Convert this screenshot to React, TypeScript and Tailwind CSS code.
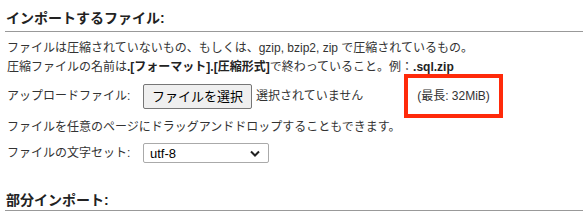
import React from "react";

export default function App() {
  return (
    <div
      className="w-[583px] h-[211px] overflow-hidden bg-white text-[#333]"
      style={{ fontFamily: '"Liberation Sans", "Noto Sans CJK JP", sans-serif' }}
    >
      <div className="pl-[5px] pt-[9px]">
        <h2 className="text-[14px] font-bold leading-[18px] pl-[1px] pb-[4px] border-b border-[#999] text-[#222]">
          インポートするファイル:
        </h2>
        <div className="pl-[2px] pt-[7px] text-[12px] leading-[19px]">
          <p>ファイルは圧縮されていないもの、もしくは、gzip, bzip2, zip で圧縮されているもの。</p>
          <p>
            圧縮ファイルの名前は<b className="text-[#222]">.[フォーマット].[圧縮形式]</b>で終わっていること。例：<b className="text-[#222]">.sql.zip</b>
          </p>
          <div className="flex items-center h-[44px] mt-[-3px]">
            <span className="w-[136px]">アップロードファイル:</span>
            <button className="h-[25px] px-[8px] bg-[#efefef] border border-[#767676] rounded-[2px] text-[13px] text-black">
              ファイルを選択
            </button>
            <span className="ml-[4px] w-[170px]">選択されていません</span>
            <div className="ml-[-22px] w-[99px] h-[44px] border-[4px] border-[#ff2a0a] flex items-center justify-center">
              <span>(最長: 32MiB)</span>
            </div>
          </div>
          <p className="mt-[-1px] leading-[20px]">ファイルを任意のページにドラッグアンドドロップすることもできます。</p>
          <div className="flex items-center mt-[6px]">
            <span className="w-[136px]">ファイルの文字セット:</span>
            <div className="w-[126px] h-[20px] border border-[#aaa] rounded-[2px] flex items-center justify-between pl-[6px] pr-[8px] text-[13px] text-black">
              <span>utf-8</span>
              <svg width="10" height="7" viewBox="0 0 10 7">
                <path d="M1 1.5 L5 5.5 L9 1.5" stroke="#222" strokeWidth="2" fill="none" />
              </svg>
            </div>
          </div>
        </div>
        <h2 className="mt-[28px] text-[14px] font-bold leading-[18px] pl-[1px] pb-[1px] border-b border-[#999] text-[#222]">
          部分インポート:
        </h2>
      </div>
    </div>
  );
}
